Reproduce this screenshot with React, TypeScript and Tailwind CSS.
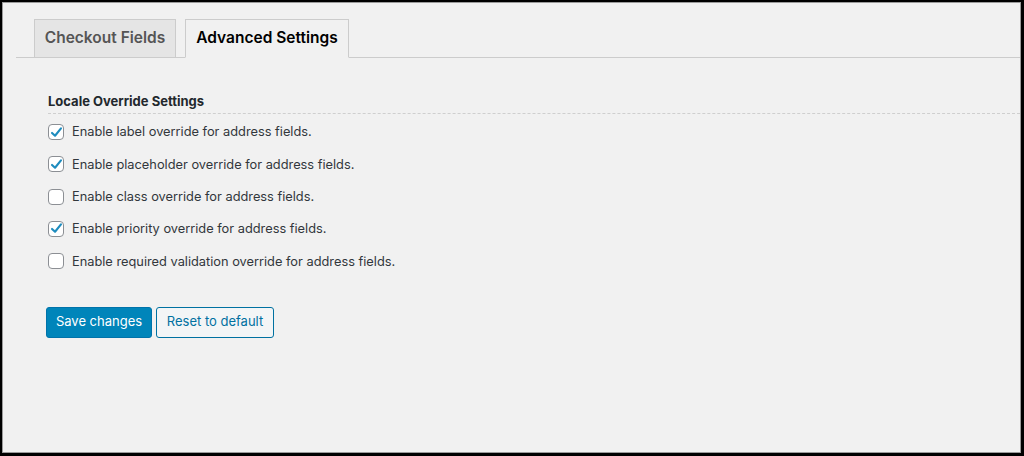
import React, { useState } from "react";

const options = [
  { id: "label", text: "Enable label override for address fields.", on: true },
  { id: "placeholder", text: "Enable placeholder override for address fields.", on: true },
  { id: "class", text: "Enable class override for address fields.", on: false },
  { id: "priority", text: "Enable priority override for address fields.", on: true },
  { id: "required", text: "Enable required validation override for address fields.", on: false },
];

const Check: React.FC<{ checked: boolean; onClick: () => void }> = ({ checked, onClick }) => (
  <button
    onClick={onClick}
    className="w-[16px] h-[16px] rounded-[4px] border border-[#8c8f94] bg-white flex items-center justify-center shrink-0"
  >
    {checked && (
      <svg width="13" height="13" viewBox="0 0 16 16">
        <path d="M2.5 8.5 L6.2 12 L13.5 3" fill="none" stroke="#1e8cbe" strokeWidth="2.6" strokeLinecap="round" strokeLinejoin="round" />
      </svg>
    )}
  </button>
);

export default function App() {
  const [tab, setTab] = useState("advanced");
  const [checks, setChecks] = useState<Record<string, boolean>>(
    Object.fromEntries(options.map((o) => [o.id, o.on]))
  );

  return (
    <div
      className="w-[1024px] h-[456px] bg-black pt-[2px] pl-[2px] pr-[3px] pb-[3px]"
      style={{ fontFamily: "Inter, 'Liberation Sans', Arial, sans-serif" }}
    >
      <div className="w-full h-full bg-[#f1f1f1] border border-[#9b9b9b] pl-[13px] pr-0 pt-[16px]">
        {/* Tabs */}
        <div className="flex items-end gap-[9px] pl-[18px] border-b border-[#cccccc] h-[39px]">
          <button
            onClick={() => setTab("checkout")}
            className={`h-[39px] w-[142px] -mb-px pb-[2px] border border-[#cccccc] text-[15.5px] font-semibold ${
              tab === "checkout" ? "bg-[#f1f1f1] border-b-[#f1f1f1] text-black" : "bg-[#e5e5e5] text-[#555555]"
            }`}
          >
            Checkout Fields
          </button>
          <button
            onClick={() => setTab("advanced")}
            className={`h-[39px] w-[164px] -mb-px pb-[2px] border border-[#cccccc] text-[15.5px] font-semibold ${
              tab === "advanced" ? "bg-[#f1f1f1] border-b-[#f1f1f1] text-black" : "bg-[#e5e5e5] text-[#555555]"
            }`}
          >
            Advanced Settings
          </button>
        </div>

        {/* Section */}
        <div className="pl-[32px] pt-[34px]">
          <div className="text-[13px] font-bold text-[#23282d] pb-[1px] border-b border-dashed border-[#cfcfcf]">
            Locale Override Settings
          </div>
          <div className="flex flex-col pt-[9px] gap-[13.3px]">
            {options.map((o) => (
              <label key={o.id} className="flex items-center gap-[8px] h-[19px] text-[12.8px] text-[#32373c] cursor-pointer">
                <Check
                  checked={checks[o.id]}
                  onClick={() => setChecks((p) => ({ ...p, [o.id]: !p[o.id] }))}
                />
                <span>{o.text}</span>
              </label>
            ))}
          </div>

          <div className="flex gap-[4px] mt-[36px] -ml-[2px]">
            <button className="h-[31px] w-[106px] rounded-[3px] bg-[#0085ba] border border-[#0073aa] text-white text-[13px]">
              Save changes
            </button>
            <button className="h-[31px] w-[118px] rounded-[3px] bg-[#f3f5f6] border border-[#0071a1] text-[#0071a1] text-[13px]">
              Reset to default
            </button>
          </div>
        </div>
      </div>
    </div>
  );
}
